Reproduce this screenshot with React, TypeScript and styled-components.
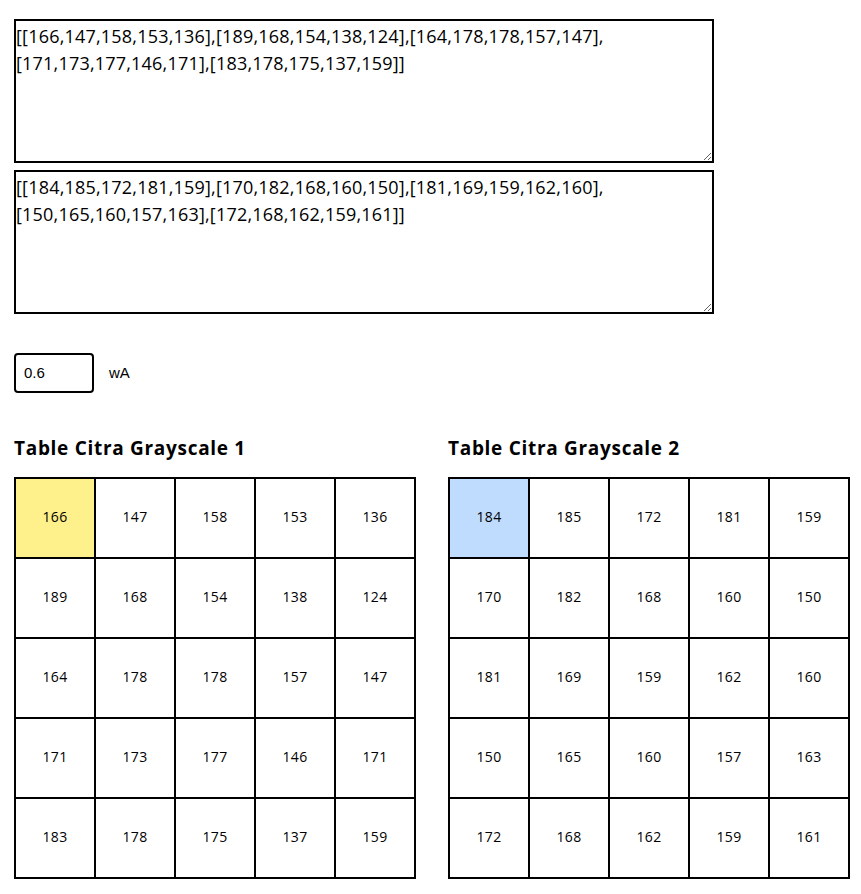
import React from "react";
import styled, { createGlobalStyle } from "styled-components";

const Global = createGlobalStyle`
  body { margin: 8px; background: #fff; color: #000; font-family: "Open Sans", "DejaVu Sans", sans-serif; }
  * { box-sizing: border-box; }
`;

const Page = styled.div`
  padding: 11px 6px 0 6px;
  display: flex;
  flex-direction: column;
`;

const Areas = styled.div`
  display: flex;
  flex-direction: column;
  gap: 7px;
`;

const Area = styled.textarea`
  width: 700px;
  height: 144px;
  border: 2px solid #000;
  padding: 2px 0 0 0;
  font-family: "Open Sans", sans-serif;
  font-size: 18px;
  letter-spacing: 0.2px;
  line-height: 27px;
  color: #000;
  resize: vertical;
  outline: none;
  display: block;
`;

const WeightRow = styled.div`
  display: flex;
  align-items: center;
  gap: 15px;
  margin-top: 39px;
`;

const NumInput = styled.input`
  width: 80px;
  height: 40px;
  border: 2px solid #000;
  border-radius: 4px;
  padding: 0 8px 2px 8px;
  font-family: "Liberation Sans", Arial, sans-serif;
  font-size: 15px;
  color: #000;
  outline: none;
`;

const Label = styled.span`
  font-family: "Liberation Sans", Arial, sans-serif;
  font-size: 15px;
  padding-bottom: 2px;
`;

const Tables = styled.div`
  display: flex;
  gap: 32px;
  margin-top: 39px;
`;

const TableBlock = styled.div`
  display: flex;
  flex-direction: column;
  gap: 18px;
`;

const Heading = styled.h3`
  margin: 0;
  font-family: "Open Sans", sans-serif;
  font-weight: 700;
  font-size: 19px;
  letter-spacing: 0.7px;
  line-height: 22px;
  padding-top: 5px;
`;

const Grid = styled.table`
  width: 402px;
  border-collapse: collapse;
  border: 2px solid #000;
  table-layout: fixed;
`;

const Cell = styled.td<{ $bg?: string }>`
  height: 80px;
  border: 2px solid #000;
  text-align: center;
  vertical-align: middle;
  padding: 0 0 3px 0;
  font-family: "Open Sans", sans-serif;
  font-size: 14px;
  letter-spacing: 0.3px;
  background: ${(p) => p.$bg || "#fff"};
`;

const m1 = [
  [166, 147, 158, 153, 136],
  [189, 168, 154, 138, 124],
  [164, 178, 178, 157, 147],
  [171, 173, 177, 146, 171],
  [183, 178, 175, 137, 159],
];
const m2 = [
  [184, 185, 172, 181, 159],
  [170, 182, 168, 160, 150],
  [181, 169, 159, 162, 160],
  [150, 165, 160, 157, 163],
  [172, 168, 162, 159, 161],
];

function Matrix({ title, data, hl }: { title: string; data: number[][]; hl: string }) {
  return (
    <TableBlock>
      <Heading>{title}</Heading>
      <Grid>
        <tbody>
          {data.map((row, i) => (
            <tr key={i}>
              {row.map((v, j) => (
                <Cell key={j} $bg={i === 0 && j === 0 ? hl : undefined}>
                  {v}
                </Cell>
              ))}
            </tr>
          ))}
        </tbody>
      </Grid>
    </TableBlock>
  );
}

export default function App() {
  return (
    <Page>
      <Global />
      <Areas>
        <Area defaultValue={JSON.stringify(m1)} />
        <Area defaultValue={JSON.stringify(m2)} />
      </Areas>
      <WeightRow>
        <NumInput defaultValue="0.6" />
        <Label>wA</Label>
      </WeightRow>
      <Tables>
        <Matrix title="Table Citra Grayscale 1" data={m1} hl="#fef08a" />
        <Matrix title="Table Citra Grayscale 2" data={m2} hl="#bfdbfe" />
      </Tables>
    </Page>
  );
}
